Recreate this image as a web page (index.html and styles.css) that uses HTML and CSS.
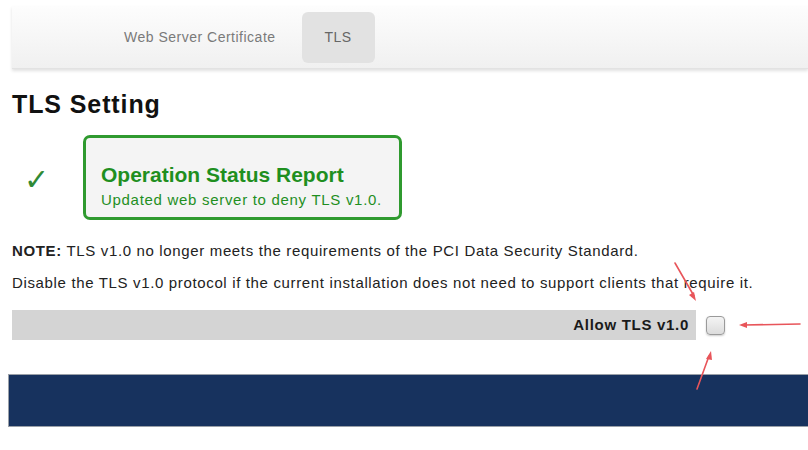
FILE: index.html
```html
<!DOCTYPE html>
<html lang="en">
<head>
<meta charset="utf-8">
<title>TLS Setting</title>
<link rel="stylesheet" href="styles.css">
</head>
<body>
  <nav class="tabbar">
    <a class="tab">Web Server Certificate</a>
    <a class="tab tab-active">TLS</a>
  </nav>

  <main class="content">
    <h1 class="title">TLS Setting</h1>

    <div class="status">
      <span class="status-icon">&#10003;</span>
      <div class="status-box">
        <div class="status-head">Operation Status Report</div>
        <div class="status-msg">Updated web server to deny TLS v1.0.</div>
      </div>
    </div>

    <p class="note note-first"><b>NOTE:</b> TLS v1.0 no longer meets the requirements of the PCI Data Security Standard.</p>
    <p class="note">Disable the TLS v1.0 protocol if the current installation does not need to support clients that require it.</p>

    <div class="option-row">
      <label class="option-label" for="allow-tls10">Allow TLS v1.0</label>
      <span class="check-wrap">
        <input type="checkbox" id="allow-tls10" class="check">
        <svg class="arrows" width="200" height="140" viewBox="0 0 200 140">
          <g stroke="#e8555a" stroke-width="1.6" fill="none" stroke-linecap="round">
            <line x1="-31" y1="-53" x2="-12" y2="-20"/>
            <line x1="94" y1="8" x2="38" y2="9"/>
            <line x1="-9" y1="73" x2="3" y2="40"/>
          </g>
          <g fill="#e8555a">
            <polygon points="-10,-15 -17,-21 -12,-24"/>
            <polygon points="33,9 41,6 41,12"/>
            <polygon points="5,35 0,43 6,44"/>
          </g>
        </svg>
      </span>
    </div>

    <div class="footer-bar"></div>
  </main>
</body>
</html>
```

FILE: styles.css
```css
html, body {
  margin: 0;
  padding: 0;
  background: #ffffff;
  font-family: "Liberation Sans", Arial, sans-serif;
  color: #222;
}

body {
  padding-top: 6px;
  overflow: hidden;
}

/* top tab strip */
.tabbar {
  margin-left: 12px;
  height: 63px;
  display: flex;
  align-items: center;
  gap: 26px;
  padding-left: 112px;
  background: linear-gradient(#fdfdfd, #f0f0f0);
  box-shadow: 0 2px 3px rgba(0, 0, 0, 0.12);
  border-bottom: 1px solid #e2e2e2;
  box-sizing: border-box;
}

.tab {
  font-size: 14px;
  letter-spacing: 0.5px;
  color: #7a7a7a;
  text-decoration: none;
}

.tab-active {
  width: 73px;
  height: 51px;
  display: flex;
  align-items: center;
  justify-content: center;
  background: #e2e2e2;
  border-radius: 6px;
  color: #666;
}

.content {
  padding: 0 0 0 12px;
}

.title {
  margin: 21px 0 0 0;
  font-size: 25px;
  letter-spacing: 0.9px;
  font-weight: bold;
  color: #111;
  line-height: 28px;
}

/* status report */
.status {
  display: flex;
  align-items: center;
  margin-top: 17px;
}

.status-icon {
  width: 71px;
  padding-left: 12px;
  box-sizing: border-box;
  font-family: "DejaVu Sans", sans-serif;
  font-size: 30px;
  color: #2f8a35;
  margin-top: 4px;
}

.status-box {
  width: 319px;
  height: 85px;
  box-sizing: border-box;
  border: 3px solid #2f9a2f;
  border-radius: 7px;
  background: #f4f4f4;
  padding: 25px 0 0 15px;
  color: #1f8f1f;
}

.status-head {
  font-size: 21px;
  font-weight: bold;
  line-height: 24px;
}

.status-msg {
  font-size: 15px;
  letter-spacing: 0.7px;
  line-height: 18px;
  margin-top: 4px;
}

/* notes */
.note {
  margin: 0;
  font-size: 15px;
  letter-spacing: 0.65px;
  line-height: 32px;
  color: #222;
}

.note-first {
  margin-top: 15px;
}

/* option row */
.option-row {
  display: flex;
  align-items: center;
  margin-top: 11px;
}

.option-label {
  width: 684px;
  height: 30px;
  box-sizing: border-box;
  background: #d4d4d4;
  text-align: right;
  padding-right: 7px;
  font-weight: bold;
  font-size: 15px;
  letter-spacing: 0.7px;
  line-height: 30px;
  color: #1a1a1a;
}

.check-wrap {
  position: relative;
  margin-left: 10px;
  display: inline-flex;
}

.check {
  margin: 0;
  width: 19px;
  height: 19px;
  appearance: none;
  border: 1px solid #9a9a9a;
  border-radius: 4px;
  background: linear-gradient(#f4f4f4, #dcdcdc);
  box-shadow: 0 1px 2px rgba(0,0,0,0.2);
}

.arrows {
  position: absolute;
  left: 0;
  top: 0;
  overflow: visible;
  pointer-events: none;
}

.footer-bar {
  margin: 34px 0 0 -4px;
  height: 53px;
  background: #17325e;
  border: 1px solid #9aa0a8;
  border-right: none;
  box-sizing: border-box;
}
```
